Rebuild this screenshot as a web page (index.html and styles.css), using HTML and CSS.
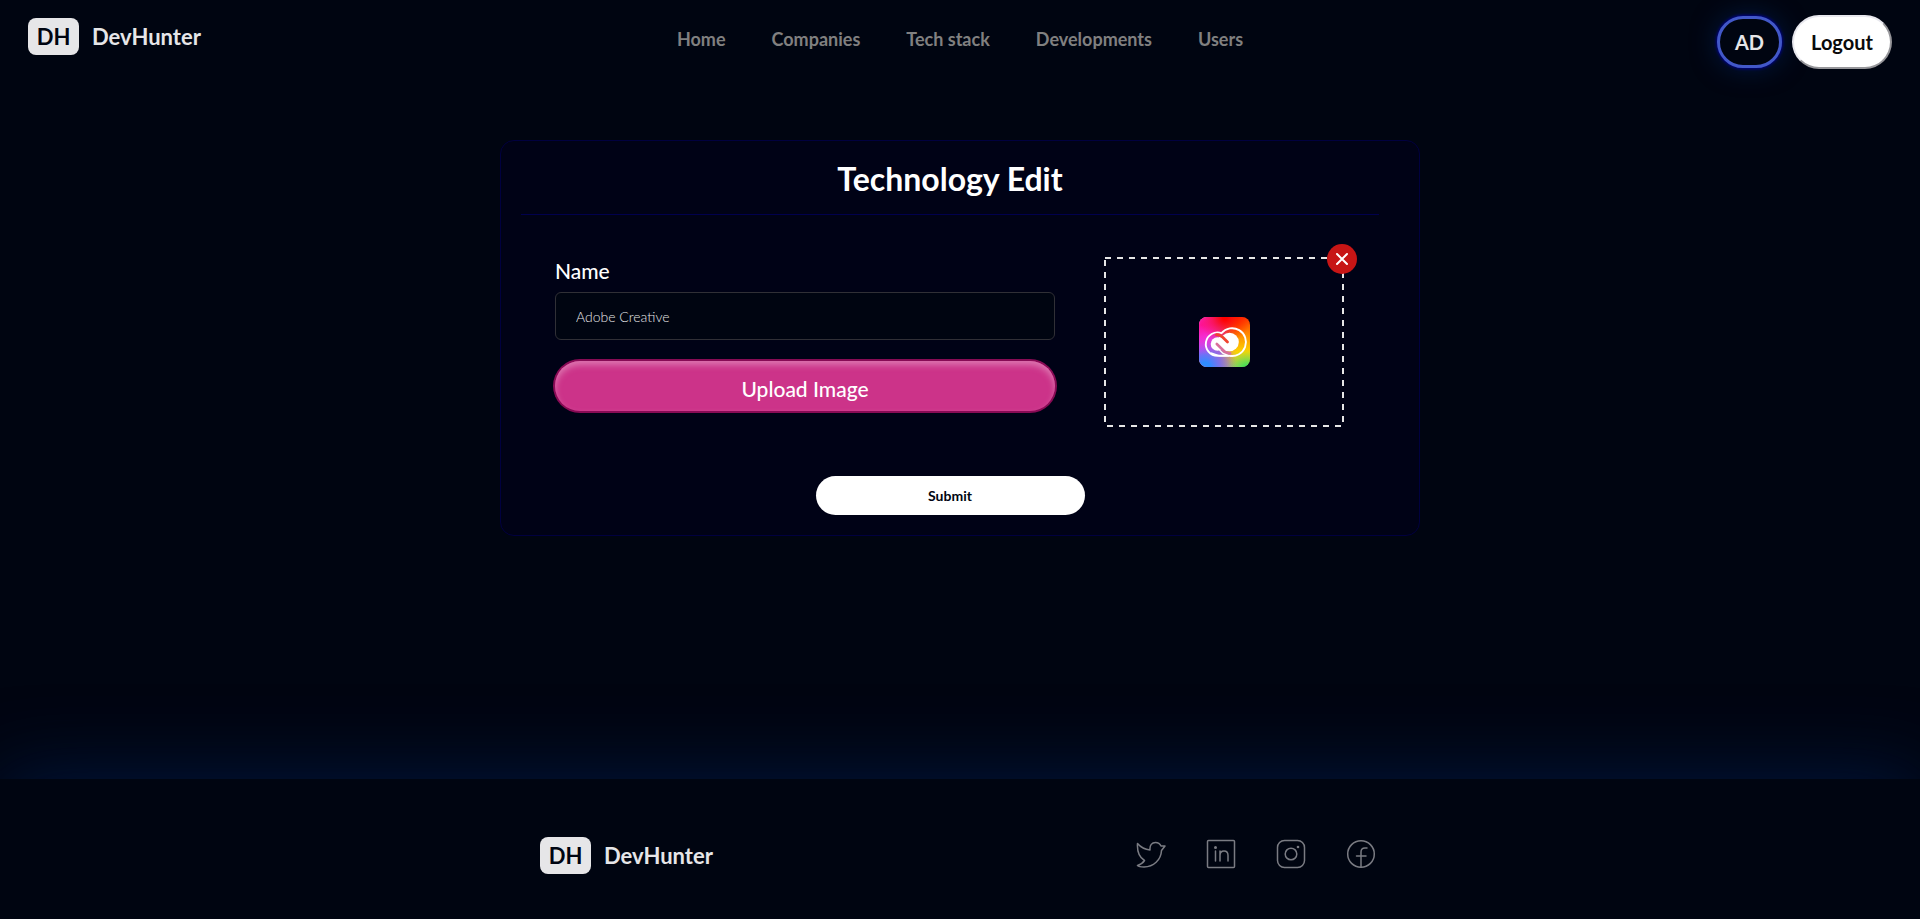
FILE: index.html
```html
<!DOCTYPE html>
<html lang="en">
<head>
<meta charset="utf-8">
<title>DevHunter</title>
<link rel="stylesheet" href="styles.css">
</head>
<body>
<header class="header">
  <a class="brand" href="#"><span class="brand-mark">DH</span><span class="brand-name">DevHunter</span></a>
  <nav class="nav">
    <a href="#">Home</a>
    <a href="#">Companies</a>
    <a href="#">Tech stack</a>
    <a href="#">Developments</a>
    <a href="#">Users</a>
  </nav>
  <div class="account">
    <button class="avatar" type="button">AD</button>
    <button class="logout" type="button">Logout</button>
  </div>
</header>
<main class="main">
  <form class="card">
    <h1 class="card-title">Technology Edit</h1>
    <div class="fields">
      <div class="column">
        <label class="label" for="name">Name</label>
        <input class="input" id="name" type="text" value="Adobe Creative">
        <button class="upload" type="button">Upload Image</button>
      </div>
      <div class="preview">
        <svg class="frame" aria-hidden="true"><rect x="1" y="1" width="100%" height="100%"/></svg>
        <svg class="logo" viewBox="0 0 51 50" role="img" aria-label="Adobe Creative Cloud">
          <defs>
            <clipPath id="tile"><rect width="51" height="50" rx="8"/></clipPath>
            <radialGradient id="red" gradientUnits="userSpaceOnUse" cx="26" cy="0" r="26"><stop offset="0.1" stop-color="#f00"/><stop offset="1" stop-color="#f00" stop-opacity="0"/></radialGradient>
            <radialGradient id="pink" gradientUnits="userSpaceOnUse" cx="2" cy="8" r="30"><stop offset="0" stop-color="#ff1298"/><stop offset="0.4" stop-color="#f52bd0"/><stop offset="1" stop-color="#e834f0" stop-opacity="0"/></radialGradient>
            <radialGradient id="blue" gradientUnits="userSpaceOnUse" cx="6" cy="50" r="32"><stop offset="0.15" stop-color="#2f8dff"/><stop offset="1" stop-color="#7d62ff" stop-opacity="0"/></radialGradient>
            <radialGradient id="green" gradientUnits="userSpaceOnUse" cx="48" cy="52" r="20"><stop offset="0" stop-color="#1de356"/><stop offset="1" stop-color="#7fdc50" stop-opacity="0"/></radialGradient>
            <linearGradient id="warm" x1="0" y1="0" x2="0" y2="1"><stop offset="0" stop-color="#ff3c00"/><stop offset="0.35" stop-color="#ff8a00"/><stop offset="0.7" stop-color="#fdd500"/><stop offset="1" stop-color="#a5d060"/></linearGradient>
            <linearGradient id="cool" x1="0" y1="0" x2="1" y2="0"><stop offset="0" stop-color="#d545ec"/><stop offset="0.4" stop-color="#d060c0"/><stop offset="0.75" stop-color="#e09060" stop-opacity="0"/></linearGradient>
          </defs>
          <g clip-path="url(#tile)">
            <rect width="51" height="50" fill="url(#warm)"/>
            <rect width="51" height="50" fill="url(#cool)"/>
            <rect width="51" height="50" fill="url(#blue)"/>
            <rect width="51" height="50" fill="url(#pink)"/>
            <rect width="51" height="50" fill="url(#red)"/>
            <rect width="51" height="50" fill="url(#green)"/>
          </g>
          <path d="M18.500 38.800A11.700 11.700 0 1 1 22.500 16.100A13.900 13.900 0 1 1 30.500 38.800Z" fill="none" stroke="#fff" stroke-width="1.900"/>
          <circle cx="30.500" cy="25" r="9.300" fill="#fff"/>
          <circle cx="18.500" cy="27" r="6.800" fill="#fff"/>
          <path d="M18 27L25 34H31V22L20 20Z" fill="#fff"/>
          <path d="M17.500 17.700Q21.500 17.500 25.500 22L28.500 25" fill="none" stroke="#f0442e" stroke-width="2.800" stroke-linecap="round"/>
          <path d="M17.800 27L25.500 34.500Q27.500 36.400 31 36.400" fill="none" stroke="#d9709b" stroke-width="2.600" stroke-linecap="round"/>
          <path d="M12 36L20.500 38.800H30L24 36.400L20.500 33" fill="none" stroke="#fff" stroke-width="1.400"/>
        </svg>
        <button class="remove" type="button" aria-label="Remove image">
          <svg viewBox="0 0 30 30" aria-hidden="true"><path d="M10 10L20 20M20 10L10 20"/></svg>
        </button>
      </div>
    </div>
    <button class="submit" type="submit">Submit</button>
  </form>
</main>
<footer class="footer">
  <div class="footer-inner">
    <a class="brand" href="#"><span class="brand-mark">DH</span><span class="brand-name">DevHunter</span></a>
    <div class="social">
      <a href="#" aria-label="Twitter"><svg viewBox="0 0 30 30"><path d="M1.500 4.500C4.500 8 8.500 10.500 14 11C13.500 6 16 3.500 19.500 3.500C22 3.500 24 4.800 25 7H29L25.500 11.500C25 21 17.500 28 8 28C5 28 2.500 27.500 1.500 26.500C4.500 25.500 7 24 8.500 21.500C2.500 18 1 12 1.500 4.500Z"/></svg></a>
      <a href="#" aria-label="LinkedIn"><svg viewBox="0 0 30 30"><rect x="1.500" y="1.500" width="27" height="27" rx="1"/><path d="M9.500 12V22M14 12V22M14 16.500C14 13.500 16 12 18 12C20.500 12 22 13.700 22 16.500V22"/><circle class="dot" cx="9.500" cy="8.500" r="1.500"/></svg></a>
      <a href="#" aria-label="Instagram"><svg viewBox="0 0 30 30"><rect x="1.500" y="1.500" width="27" height="27" rx="7"/><circle cx="15" cy="15" r="5.800"/><circle class="dot" cx="22" cy="8" r="1.300"/></svg></a>
      <a href="#" aria-label="Facebook"><svg viewBox="0 0 30 30"><circle cx="15" cy="15" r="13.300"/><path d="M15 28V13C15 10.500 16.500 9 19 9H21M10.500 17H20"/></svg></a>
    </div>
  </div>
</footer>
</body>
</html>
```
FILE: styles.css
```css
* { box-sizing: border-box; }
body {
  margin: 0;
  min-height: 100vh;
  display: flex;
  flex-direction: column;
  background: #000511;
  color: #fff;
  font-family: Lato, "Open Sans", sans-serif;
}
a { color: inherit; text-decoration: none; }
button, input { font-family: inherit; }
button { cursor: pointer; }

.header {
  display: grid;
  grid-template-columns: 1fr auto 1fr;
  height: 88px;
  padding: 15px 28px 0;
}
.brand {
  display: flex;
  align-items: center;
  align-self: start;
  gap: 13px;
  padding-top: 3px;
  color: #e6e6e8;
  font-size: 22px;
  font-weight: 700;
  line-height: 37px;
}
.brand-mark {
  width: 51px;
  border-radius: 8px;
  background: #e6e6e8;
  color: #000511;
  text-align: center;
}
.nav {
  display: flex;
  gap: 46px;
  padding-top: 12px;
  color: #808080;
  font-size: 18px;
  font-weight: 700;
  line-height: 24px;
}
.account {
  display: flex;
  align-items: start;
  justify-content: flex-end;
  gap: 10px;
}
.avatar, .logout { font-weight: 700; padding: 0; }
.avatar {
  width: 65px;
  height: 52px;
  margin-top: 1px;
  border: 3px solid #4258c8;
  border-radius: 26px;
  background: #000511;
  box-shadow: 0 0 3px 1px #00008b, 0 0 26px #001a44;
  color: #e6e6e8;
  font-size: 20px;
}
.logout {
  width: 100px;
  height: 54px;
  border: 2px outset #e8e8ee;
  border-radius: 27px;
  background: #fff;
  color: #0a0a0a;
  font-size: 20px;
}

.main {
  flex: 1;
  padding: 52px 20px;
}
.card {
  display: flex;
  flex-direction: column;
  max-width: 920px;
  margin: 0 auto;
  padding: 0 40px 20px 20px;
  border: 1px solid #00003f;
  border-radius: 14px;
  background: #000216;
}
.card-title {
  margin: 0;
  padding: 18px 0 15px;
  border-bottom: 1px solid #00004d;
  font-size: 32px;
  line-height: 40px;
  text-align: center;
}
.fields {
  display: flex;
  gap: 49px;
  padding: 42px 35px 0 34px;
}
.column {
  display: flex;
  flex: 1;
  flex-direction: column;
}
.label {
  margin-bottom: 7px;
  font-size: 21px;
  font-weight: 500;
  line-height: 28px;
}
.input {
  height: 48px;
  padding: 0 20px;
  border: 1px solid #303036;
  border-radius: 6px;
  background: #000511;
  color: #e6e6e8;
  font-size: 14px;
  font-weight: 300;
  outline: none;
}
.upload {
  height: 50px;
  margin-top: 21px;
  padding: 4px 0 0;
  border: 0;
  border-radius: 25px;
  background: #cc3389;
  box-shadow: 0 0 0 2px #880b55, inset 0 4px 6px #dc75af;
  color: #fff;
  font-size: 21px;
  font-weight: 500;
}
.preview {
  position: relative;
  display: flex;
  align-items: center;
  justify-content: center;
  width: 240px;
  height: 170px;
}
.frame {
  position: absolute;
  inset: 0;
  width: 238px;
  height: 168px;
  overflow: visible;
}
.frame rect {
  fill: none;
  stroke: #e6e6e6;
  stroke-width: 2;
  stroke-dasharray: 6 6;
}
.logo { width: 51px; height: 50px; }
.remove {
  position: absolute;
  top: -13px;
  right: -13px;
  width: 30px;
  height: 30px;
  padding: 0;
  border: 0;
  border-radius: 50%;
  background: #c71515;
}
.remove svg { display: block; fill: none; stroke: #fff; stroke-width: 2; stroke-linecap: round; }
.submit {
  align-self: center;
  width: 269px;
  height: 39px;
  margin-top: 49px;
  border: 0;
  border-radius: 20px;
  background: #fff;
  color: #000511;
  font-size: 14px;
  font-weight: 700;
}

.footer {
  padding: 55px 20px 45px;
  background: #000511;
  box-shadow: 0 0 80px #001740;
}
.footer-inner {
  display: flex;
  justify-content: space-between;
  max-width: 840px;
  margin: 0 auto;
}
.social {
  display: flex;
  align-items: start;
  gap: 40px;
  padding: 5px 4px 0 0;
}
.social svg {
  display: block;
  width: 30px;
  height: 30px;
  fill: none;
  stroke: #7a7c83;
  stroke-width: 1.500;
  stroke-linejoin: round;
  stroke-linecap: round;
}
.social .dot { fill: #7a7c83; stroke: none; }
```
